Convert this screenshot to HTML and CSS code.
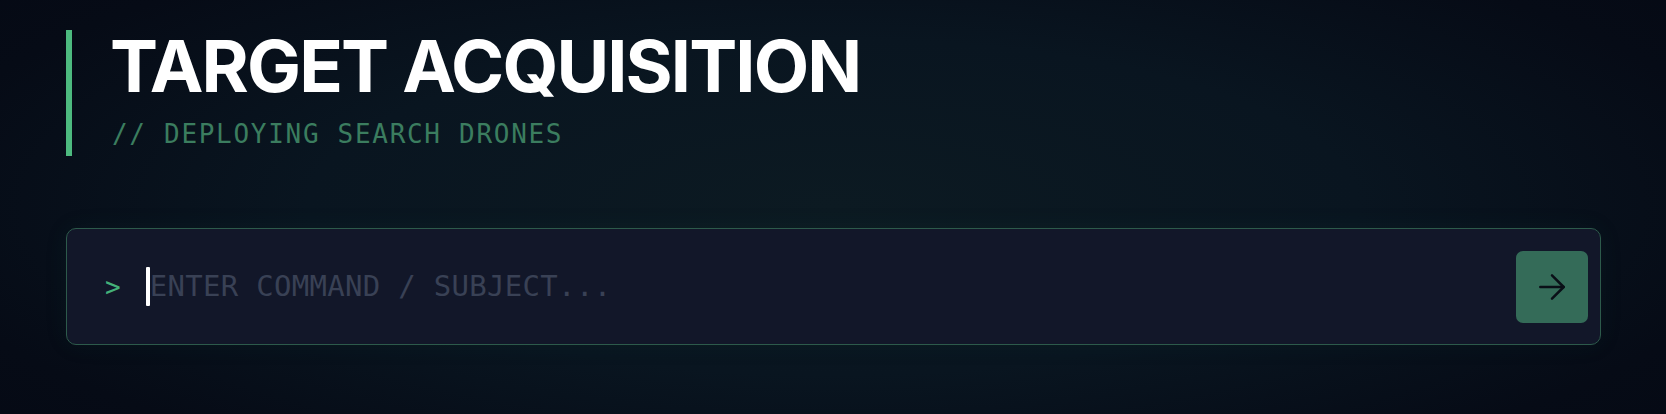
FILE: index.html
```html
<!DOCTYPE html>
<html lang="en">
<head>
<meta charset="utf-8">
<title>Target Acquisition</title>
<link rel="stylesheet" href="styles.css">
</head>
<body>
<main class="page">
  <header class="header">
    <h1 class="title">TARGET ACQUISITION</h1>
    <p class="subtitle">// DEPLOYING SEARCH DRONES</p>
  </header>
  <form class="command">
    <span class="prompt">&gt;</span>
    <div class="field">
      <span class="caret"></span><span class="placeholder">ENTER COMMAND / SUBJECT...</span>
    </div>
    <button type="button" class="submit" aria-label="Submit">
      <svg width="40" height="40" viewBox="0 0 24 24" fill="none" stroke="currentColor" stroke-width="1.5" stroke-linecap="round" stroke-linejoin="round"><path d="M5 12h14"/><path d="M12 5l7 7-7 7"/></svg>
    </button>
  </form>
</main>
</body>
</html>
```

FILE: styles.css
```css
html, body {
  margin: 0;
  padding: 0;
  height: 100%;
}
body {
  background: radial-gradient(ellipse 70% 90% at 50% 50%, #0c1a22 0%, #091520 45%, #060b16 80%, #050914 100%);
  font-family: "DejaVu Sans Mono", monospace;
  overflow: hidden;
}
.page {
  padding: 30px 65px 0 66px;
  display: flex;
  flex-direction: column;
}
.header {
  border-left: 6px solid #4dba7f;
  padding-left: 38px;
  padding-bottom: 4px;
}
.title {
  margin: 0;
  font-family: Inter, "Liberation Sans", sans-serif;
  font-weight: 700;
  font-size: 72px;
  line-height: 72px;
  letter-spacing: -1.9px;
  color: #ffffff;
}
.subtitle {
  margin: 14px 0 0 2px;
  font-family: "DejaVu Sans Mono", monospace;
  font-size: 26px;
  line-height: 36px;
  letter-spacing: 1.7px;
  color: #3b7d5f;
}
.command {
  margin: 72px 0 0;
  height: 117px;
  box-sizing: border-box;
  display: flex;
  align-items: center;
  border: 1px solid #2d5a4b;
  border-radius: 10px;
  background: #121729;
  padding: 0 12px 0 38px;
  box-shadow: 0 0 24px rgba(40, 110, 80, 0.08);
}
.prompt {
  font-size: 26px;
  color: #44b179;
  margin-right: 25px;
  line-height: 1;
}
.field {
  flex: 1;
  display: flex;
  align-items: center;
}
.caret {
  width: 4px;
  height: 39px;
  background: #ffffff;
  border-radius: 1px;
}
.placeholder {
  font-size: 29px;
  letter-spacing: 0.3px;
  color: #394155;
  line-height: 1;
}
.submit {
  width: 72px;
  height: 72px;
  border: none;
  border-radius: 7px;
  background: #346b58;
  color: #0a0f17;
  display: flex;
  align-items: center;
  justify-content: center;
  padding: 0;
  cursor: pointer;
}
```
